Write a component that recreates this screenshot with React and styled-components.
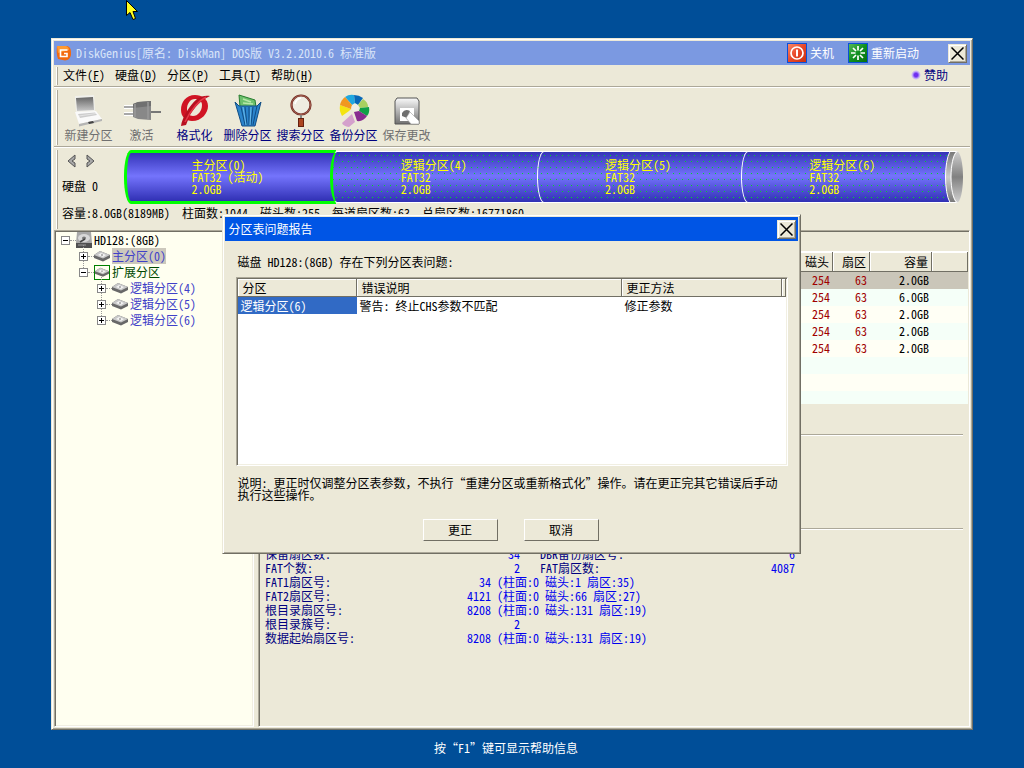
import React from "react";
import styled, { createGlobalStyle, css } from "styled-components";

const GlobalStyle = createGlobalStyle`
  * {
    box-sizing: border-box;
  }

  body {
    margin: 0;
    background: #004e98;
  }

  body,
  button,
  table {
    font-family: "Noto Sans Mono CJK SC", "Noto Sans CJK SC", monospace;
    font-size: 12px;
    line-height: 14px;
    color: #000;
    text-spacing-trim: space-all;
  }
`;

const menus = [
  ["文件", "F"],
  ["硬盘", "D"],
  ["分区", "P"],
  ["工具", "T"],
  ["帮助", "H"],
];

const segments = [
  { name: "主分区(0)", type: "FAT32 (活动)", size: "2.0GB", active: true },
  { name: "逻辑分区(4)", type: "FAT32", size: "2.0GB", next: true },
  { name: "逻辑分区(5)", type: "FAT32", size: "2.0GB" },
  { name: "逻辑分区(6)", type: "FAT32", size: "2.0GB" },
];

const sizes = ["2.0GB", "6.0GB", "2.0GB", "2.0GB", "2.0GB"];

const details = [
  { label: "保留扇区数:", value: "34", label2: "DBR备份扇区号:", value2: "6" },
  { label: "FAT个数:", value: "2", label2: "FAT扇区数:", value2: "4087" },
  { label: "FAT1扇区号:", value: "34", chs: "(柱面:0 磁头:1 扇区:35)" },
  { label: "FAT2扇区号:", value: "4121", chs: "(柱面:0 磁头:66 扇区:27)" },
  { label: "根目录扇区号:", value: "8208", chs: "(柱面:0 磁头:131 扇区:19)" },
  { label: "根目录簇号:", value: "2" },
  { label: "数据起始扇区号:", value: "8208", chs: "(柱面:0 磁头:131 扇区:19)" },
];

/* icons */

const LogoIcon = () => (
  <svg width="16" height="16" viewBox="0 0 16 16">
    <path d="M1 1 H11 Q15 2 15 7 V10 Q14 15 9 15.500 L2 14 Q0 9 1 1Z" fill="#f26a10" />
    <path d="M1 1 H10 Q13 2 13 5 L2 8Z" fill="#ff9a30" />
    <path d="M11.500 5 H4.500 V11.500 H11 V8.500 H8" fill="none" stroke="#fff" strokeWidth="1.600" />
  </svg>
);

const PowerIcon = () => (
  <svg width="20" height="20" viewBox="0 0 20 20">
    <defs>
      <linearGradient id="power" x1="0" y1="0" x2="1" y2="1">
        <stop offset="0" stopColor="#f88a6a" />
        <stop offset="0.5" stopColor="#e8482a" />
        <stop offset="1" stopColor="#c83010" />
      </linearGradient>
    </defs>
    <rect width="20" height="20" fill="#0a50d8" />
    <rect x="1" y="1" width="18" height="18" fill="url(#power)" />
    <circle cx="10" cy="10" r="6" fill="none" stroke="#fff" strokeWidth="1.700" />
    <path d="M10 6.500 V13.500" stroke="#fff" strokeWidth="2" />
  </svg>
);

const RestartIcon = () => (
  <svg width="20" height="20" viewBox="0 0 20 20">
    <defs>
      <linearGradient id="restart" x1="0" y1="0" x2="1" y2="1">
        <stop offset="0" stopColor="#58b858" />
        <stop offset="0.5" stopColor="#109020" />
        <stop offset="1" stopColor="#087010" />
      </linearGradient>
    </defs>
    <rect width="20" height="20" fill="#0a50d8" />
    <rect x="1" y="1" width="18" height="18" fill="url(#restart)" />
    <path
      d="M10 3 V7.500 M10 12.500 V17 M3 10 H7.500 M12.500 10 H17 M5 5 L8 8 M12 12 L15 15 M15 5 L12 8 M8 12 L5 15"
      stroke="#fff"
      strokeWidth="1.700"
    />
  </svg>
);

const CloseIcon = () => (
  <svg width="13" height="13" viewBox="0 0 13 13">
    <path d="M0.500 0.500 L12.500 12.500 M12.500 0.500 L0.500 12.500" stroke="#000" strokeWidth="1.500" />
  </svg>
);

const LaptopIcon = () => (
  <svg width="34" height="34" viewBox="0 0 34 34">
    <defs>
      <linearGradient id="screen" x1="0" y1="0" x2="0" y2="1">
        <stop offset="0" stopColor="#666" />
        <stop offset="1" stopColor="#c8c8c8" />
      </linearGradient>
    </defs>
    <path d="M3 2 L22 1 L23 17 L4 18Z" fill="#f0f0ec" />
    <path d="M4 4 L21 3 L22 16 L5 17Z" fill="url(#screen)" />
    <path d="M3 18 L24 17 L30 25 L7 30Z" fill="#fafafa" />
    <path d="M6 20 L23 18.500 L25 21 L8 24Z" fill="#ccc" />
    <path d="M7 22 L24 19.500" stroke="#eee" strokeWidth="0.700" />
    <path d="M7 30 L30 25 V27 L7 32.500Z" fill="#b4b4b4" />
    <path d="M16 28 L21 27 L22 29 L17 30Z" fill="#444" />
  </svg>
);

const PlugIcon = () => (
  <svg width="40" height="34" viewBox="0 0 40 34">
    <path d="M2 13 H13 M2 20 H13" stroke="#fff" strokeWidth="4" />
    <path d="M2 13 H13 M2 20 H13" stroke="#a8a8a8" strokeWidth="2" />
    <path d="M11 10 L16 8 L29 7 V26 L16 25 L11 23Z" fill="#888" />
    <path d="M11 10 L16 8 L29 7 V12 L11 14Z" fill="#707070" />
    <path d="M13 10 V23 M26 8 V25" stroke="#999" strokeWidth="1.500" />
    <path d="M29 18 H39" stroke="#777" strokeWidth="2" />
  </svg>
);

const FormatIcon = () => (
  <svg width="34" height="34" viewBox="0 0 34 34">
    <path
      fillRule="evenodd"
      d="M17 1 C8 1 3 8 3 16 C3 23 8 27 14 27 C24 27 30 19 30 12 C30 5 24 1 17 1Z M17 5 C21 5 24 7 24 11 C24 17 20 22 15 22 C11 22 9 19 9 15 C9 10 12 5 17 5Z"
      fill="#d01424"
    />
    <path d="M32 2 C23 6 17 13 12 21 L8 31 L3 32 C4 24 11 12 19 5 C23 2 28 1 32 2Z" fill="#b81020" />
    <path d="M28 3 C20 7 13 16 7 28" stroke="#e83848" strokeWidth="1.500" fill="none" />
  </svg>
);

const TrashIcon = () => (
  <svg width="34" height="34" viewBox="0 0 34 34">
    <path d="M8 1 L24 6 L25 13 H9Z" fill="#6cc06c" stroke="#287c30" />
    <path d="M12 5 L20 8 M12 9 L22 10" stroke="#b8e8a8" strokeWidth="1.500" />
    <path d="M4 8 L8 12 H26 L30 8 L24 32 H11Z" fill="#2a84cc" stroke="#104c84" />
    <path d="M10 13 L14 31 M14 13 L16 31 M18 13 V31 M22 13 L20 31 M26 12 L22 31" stroke="#104c84" strokeWidth="1" />
    <path d="M12 13 L15 31 M20 13 L19 31" stroke="#68bbea" strokeWidth="1" />
  </svg>
);

const SearchIcon = () => (
  <svg width="34" height="34" viewBox="0 0 34 34">
    <circle cx="17" cy="11" r="9.500" fill="#efece2" stroke="#6c2820" strokeWidth="2.200" />
    <circle cx="17" cy="11" r="9.500" fill="none" stroke="#b87060" strokeWidth="0.800" />
    <path d="M11 10 Q12 5 17 4" stroke="#fff" strokeWidth="1.500" fill="none" />
    <rect x="16" y="21" width="2" height="4" fill="#888" />
    <rect x="14.500" y="24.500" width="5" height="8" fill="#ac4420" stroke="#642010" />
  </svg>
);

const WheelIcon = () => (
  <svg width="34" height="34" viewBox="0 0 34 34">
    <path d="M15 11 L8 3 Q12 0 17 1 L18 9Z" fill="#20a8e0" />
    <path d="M18 9 L17 1 Q22 1 26 4 L21 11Z" fill="#0868b8" />
    <path d="M21 11 L26 5 Q31 8 31 13 L23 14Z" fill="#a8d060" />
    <path d="M23 14 L32 13 Q33 19 30 22 L22 17Z" fill="#10a048" />
    <path d="M22 17 L30 22 Q26 28 20 27 L17 18Z" fill="#882c90" />
    <path d="M15 20 L18 28 L12 33 Q6 32 5 29Z" fill="#d4a0cc" />
    <path d="M14 15 L12 17 L5 22 Q2 17 3 11Z" fill="#f4e410" />
    <path d="M15 11 L14 15 L3 11 Q4 6 8 3Z" fill="#f09820" />
    <circle cx="18" cy="13.500" r="3.500" fill="#f0eee4" />
  </svg>
);

const SaveIcon = () => (
  <svg width="34" height="34" viewBox="0 0 34 34">
    <defs>
      <linearGradient id="floppy" x1="0" y1="0" x2="0" y2="1">
        <stop offset="0" stopColor="#fafafa" />
        <stop offset="1" stopColor="#707070" />
      </linearGradient>
    </defs>
    <path d="M7 4 H27 L29 7 V30 H5 V7Z" fill="url(#floppy)" stroke="#555" />
    <rect x="10" y="14" width="14" height="13" fill="#fff" />
    <path d="M12 19 Q15 14 20 17 L17 24 L12 22Z" fill="#707070" />
    <path d="M20 18 L29 27 V30 H21 L16 24Z" fill="#fff" stroke="#999" strokeWidth="0.600" />
  </svg>
);

const tools = [
  { label: "新建分区", Icon: LaptopIcon, disabled: true },
  { label: "激活", Icon: PlugIcon, disabled: true },
  { label: "格式化", Icon: FormatIcon },
  { label: "删除分区", Icon: TrashIcon },
  { label: "搜索分区", Icon: SearchIcon },
  { label: "备份分区", Icon: WheelIcon },
  { label: "保存更改", Icon: SaveIcon, disabled: true },
];

const ArrowIcon = ({ right }) => (
  <svg width="11" height="14" viewBox="0 0 11 14">
    <path
      d={right ? "M2 1 L9 7 L2 13 V9 L5 7 L2 5Z" : "M9 1 L2 7 L9 13 V9 L6 7 L9 5Z"}
      fill="#a8a8a8"
      stroke="#555"
    />
  </svg>
);

const HardDiskIcon = () => (
  <svg width="16" height="16" viewBox="0 0 16 16">
    <path d="M1 0 H15 L16 11 H0Z" fill="#a8a8a8" />
    <rect y="11" width="16" height="5" fill="#505050" />
    <ellipse cx="8" cy="6" rx="6" ry="4" fill="#d8d8d8" />
    <ellipse cx="8" cy="6" rx="2" ry="1.500" fill="#777" />
    <path d="M4 10 L9 7" stroke="#444" strokeWidth="1.500" />
    <path d="M2 13 H10" stroke="#999" />
  </svg>
);

const VolumeIcon = () => (
  <svg width="16" height="12" viewBox="0 0 16 12">
    <path d="M0 5 L6 1 L16 5 V8 L9 11.500 L0 8Z" fill="#686868" />
    <path d="M0 5 L6 1 L16 5 L9 8.500Z" fill="#c8c8c8" />
    <path d="M4 5 L7 3 L12 5 L9 7Z" fill="#f4f4f4" />
    <path d="M7 5 H9" stroke="#777" />
  </svg>
);

const EndCap = () => (
  <svg width="19" height="54" viewBox="0 0 19 54">
    <defs>
      <linearGradient id="rim" x1="0" y1="0" x2="0" y2="1">
        <stop offset="0" stopColor="#777" />
        <stop offset="0.5" stopColor="#ccc" />
        <stop offset="1" stopColor="#777" />
      </linearGradient>
      <linearGradient id="face" x1="0" y1="0" x2="0" y2="1">
        <stop offset="0" stopColor="#d0d0d0" />
        <stop offset="0.5" stopColor="#808080" />
        <stop offset="1" stopColor="#d0d0d0" />
      </linearGradient>
    </defs>
    <path d="M5 1.500 C-1 12 -1 42 5 52.500 H12 V1.500Z" fill="url(#rim)" stroke="#fff" />
    <ellipse cx="12" cy="27" rx="6" ry="25.500" fill="url(#face)" />
    <path d="M12 1.500 C4 8 4 46 12 52.500" fill="none" stroke="#fff" />
  </svg>
);

const Pointer = () => (
  <PointerSvg width="13" height="21" viewBox="0 0 13 21">
    <path d="M0.500 0.500 V15.500 L4 12.500 L7 19.500 L9.500 18.500 L7 11.500 H11.500Z" fill="#ffff20" stroke="#000" />
  </PointerSvg>
);

const TreeItem = ({ level, open, icon, label, color, selected }) => (
  <TreeRow $level={level}>
    <Expander $level={level} aria-label={open ? "collapse" : "expand"}>
      <svg width="9" height="9" viewBox="0 0 9 9">
        <rect x="0.500" y="0.500" width="8" height="8" fill="#fff" stroke="#888" />
        <path d={open ? "M2 4.500 H7" : "M2 4.500 H7 M4.500 2 V7"} stroke="#000" />
      </svg>
    </Expander>
    <Twig />
    {icon}
    <TreeLabel $color={color} $selected={selected}>
      {label}
    </TreeLabel>
  </TreeRow>
);

const App = () => {
  return (
    <>
      <GlobalStyle />
      <Desktop>
        <Window>
          <TitleBar>
            <LogoIcon />
            <h1>DiskGenius[原名: DiskMan] DOS版 V3.2.2010.6 标准版</h1>
            <SystemButton>
              <PowerIcon />
              关机
            </SystemButton>
            <SystemButton>
              <RestartIcon />
              重新启动
            </SystemButton>
            <CloseButton aria-label="关闭">
              <CloseIcon />
            </CloseButton>
          </TitleBar>

          <MenuBar>
            <Grip />
            {menus.map(([name, key]) => (
              <MenuButton key={key}>
                {name}(<u>{key}</u>)
              </MenuButton>
            ))}
            <Sponsor href="#sponsor">赞助</Sponsor>
          </MenuBar>
          <Divider />

          <ToolBar>
            <Grip />
            {tools.map(({ label, Icon, disabled }) => (
              <ToolButton key={label} disabled={disabled}>
                <Icon />
                {label}
              </ToolButton>
            ))}
          </ToolBar>
          <Divider />

          <DiskPanel>
            <Grip />
            <DiskArea>
              <DiskTop>
                <DiskNav>
                  <div>
                    <ArrowButton aria-label="上一个硬盘">
                      <ArrowIcon />
                    </ArrowButton>
                    <ArrowButton aria-label="下一个硬盘">
                      <ArrowIcon right />
                    </ArrowButton>
                  </div>
                  <span>硬盘 0</span>
                </DiskNav>
                <Cylinder>
                  {segments.map((s) => (
                    <Segment key={s.name} $active={s.active} $next={s.next}>
                      <span>
                        {s.name}
                        <br />
                        {s.type}
                        <br />
                        {s.size}
                      </span>
                    </Segment>
                  ))}
                  <EndCap />
                </Cylinder>
              </DiskTop>
              <DiskInfo>
                {"容量:8.0GB(8189MB)  柱面数:1044  磁头数:255  每道扇区数:63  总扇区数:16771860"}
              </DiskInfo>
            </DiskArea>
          </DiskPanel>

          <Panes>
            <Tree>
              <TreeItem level={0} open icon={<HardDiskIcon />} label="HD128:(8GB)" color="#000" />
              <TreeItem level={1} icon={<VolumeIcon />} label="主分区(0)" color="#4040c8" selected />
              <TreeItem
                level={1}
                open
                icon={
                  <GreenFrame>
                    <VolumeIcon />
                  </GreenFrame>
                }
                label="扩展分区"
                color="#004800"
              />
              <TreeItem level={2} icon={<VolumeIcon />} label="逻辑分区(4)" color="#4040c8" />
              <TreeItem level={2} icon={<VolumeIcon />} label="逻辑分区(5)" color="#4040c8" />
              <TreeItem level={2} icon={<VolumeIcon />} label="逻辑分区(6)" color="#4040c8" />
            </Tree>

            <Content>
              <PartitionList>
                <PartitionTable>
                  <colgroup>
                    <col />
                    <col width="35" />
                    <col width="37" />
                    <col width="62" />
                    <col width="36" />
                  </colgroup>
                  <thead>
                    <tr>
                      <th />
                      <th>磁头</th>
                      <th>扇区</th>
                      <th>容量</th>
                      <th />
                    </tr>
                  </thead>
                  <tbody>
                    {sizes.map((size, i) => (
                      <PartitionRow key={i} $selected={i === 0}>
                        <td />
                        <RedCell>254</RedCell>
                        <RedCell>63</RedCell>
                        <td>{size}</td>
                        <td />
                      </PartitionRow>
                    ))}
                  </tbody>
                </PartitionTable>
              </PartitionList>
              <Summary />
              <Summary $tall />
              <Details>
                {details.map((d) => (
                  <DetailRow key={d.label}>
                    <dt>{d.label}</dt>
                    <DetailValue $short={d.chs}>{d.value}</DetailValue>
                    {d.chs && <Chs>{d.chs}</Chs>}
                    {d.label2 && (
                      <>
                        <SecondLabel>{d.label2}</SecondLabel>
                        <DetailValue>{d.value2}</DetailValue>
                      </>
                    )}
                  </DetailRow>
                ))}
              </Details>
            </Content>
          </Panes>
        </Window>
        <Hint>按“F1”键可显示帮助信息</Hint>
      </Desktop>

      <Overlay>
        <Dialog role="dialog" aria-labelledby="report-title">
          <DialogTitle>
            <h2 id="report-title">分区表问题报告</h2>
            <CloseButton aria-label="关闭">
              <CloseIcon />
            </CloseButton>
          </DialogTitle>
          <DialogBody>
            <p>磁盘 HD128:(8GB) 存在下列分区表问题:</p>
            <ProblemList>
              <ProblemTable>
                <colgroup>
                  <col width="119" />
                  <col width="265" />
                  <col width="160" />
                  <col />
                </colgroup>
                <thead>
                  <tr>
                    <th>分区</th>
                    <th>错误说明</th>
                    <th>更正方法</th>
                    <th />
                  </tr>
                </thead>
                <tbody>
                  <tr>
                    <SelectedCell>逻辑分区(6)</SelectedCell>
                    <td>警告: 终止CHS参数不匹配</td>
                    <td>修正参数</td>
                    <td />
                  </tr>
                </tbody>
              </ProblemTable>
            </ProblemList>
            <Note>
              说明: 更正时仅调整分区表参数，不执行“重建分区或重新格式化”操作。请在更正完其它错误后手动执行这些操作。
            </Note>
            <Actions>
              <PushButton>更正</PushButton>
              <PushButton>取消</PushButton>
            </Actions>
          </DialogBody>
        </Dialog>
      </Overlay>
      <Pointer />
    </>
  );
};

/* shared bevels */

const raised = css`
  border: 1px solid;
  border-color: #ece9d8 #716f64 #716f64 #ece9d8;
  box-shadow: inset 1px 1px #fff, inset -1px -1px #aca899;
  background: #ece9d8;
`;

const sunken = css`
  border: 1px solid;
  border-color: #aca899 #fff #fff #aca899;
  box-shadow: inset 1px 1px #716f64, inset -1px -1px #f1efe2;
`;

const headerCell = css`
  padding: 0 3px;
  font-weight: normal;
  background: #ece9d8;
  border-right: 1px solid #716f64;
  border-bottom: 1px solid #716f64;
  box-shadow: inset 1px 1px #fff;
`;

/* window */

const Desktop = styled.div`
  display: flex;
  flex-direction: column;
  min-height: 100vh;
  padding: 38px 51px 0;
`;

const Window = styled.main`
  ${raised}
  flex: 1;
  display: flex;
  flex-direction: column;
  padding: 2px;
`;

const TitleBar = styled.header`
  display: flex;
  align-items: center;
  height: 24px;
  padding: 0 3px 0 2px;
  background: #7b99e1;

  h1 {
    flex: 1;
    margin: 0 0 0 4px;
    font-size: 12px;
    font-weight: normal;
    color: #d8e4f8;
  }
`;

const SystemButton = styled.button`
  display: flex;
  align-items: center;
  gap: 3px;
  margin-right: 14px;
  padding: 0;
  border: 0;
  background: none;
  color: #fff;
`;

const CloseButton = styled.button`
  ${raised}
  display: flex;
  align-items: center;
  justify-content: center;
  width: 19px;
  height: 19px;
  margin-left: 15px;
  padding: 0;
`;

const Grip = styled.i`
  align-self: stretch;
  width: 2px;
  margin: 2px 0 1px 2px;
  border-left: 1px solid #fff;
  border-right: 1px solid #aca899;
`;

const MenuBar = styled.nav`
  display: flex;
  align-items: center;
  height: 21px;
`;

const MenuButton = styled.button`
  width: 52px;
  padding: 0 0 2px;
  border: 0;
  background: none;
`;

const Sponsor = styled.a`
  display: flex;
  align-items: center;
  gap: 3px;
  margin: 0 22px 2px auto;
  color: #000080;
  text-decoration: none;

  &::before {
    content: "";
    width: 10px;
    height: 10px;
    border-radius: 50%;
    background: radial-gradient(#7030f0 25%, #c0a8f8 50%, transparent 70%);
  }
`;

const Divider = styled.div`
  height: 2px;
  border-top: 1px solid #aca899;
  border-bottom: 1px solid #fff;
`;

const ToolBar = styled.div`
  display: flex;
  height: 58px;
`;

const ToolButton = styled.button`
  display: flex;
  flex-direction: column;
  align-items: center;
  width: 53px;
  padding: 6px 0 0;
  border: 0;
  background: none;
  color: #000080;

  &:first-of-type {
    margin-left: 4px;
  }

  &:disabled {
    color: #707070;
  }
`;

/* disk panel */

const DiskPanel = styled.section`
  display: flex;
  height: 82px;
`;

const DiskArea = styled.div`
  flex: 1;
  min-width: 0;
  padding: 2px 6px 0 4px;
`;

const DiskTop = styled.div`
  display: flex;
`;

const DiskNav = styled.div`
  width: 62px;
  padding-top: 4px;

  div {
    display: flex;
    gap: 8px;
    height: 14px;
    margin: 0 0 11px 4px;
  }
`;

const ArrowButton = styled.button`
  display: flex;
  padding: 0;
  border: 0;
  background: none;
`;

const Cylinder = styled.div`
  flex: 1;
  display: flex;
  align-items: center;
`;

const Segment = styled.button`
  flex: 1;
  display: flex;
  align-items: center;
  justify-content: center;
  height: 52px;
  margin-right: -6px;
  padding: 0 8px 0 0;
  border: solid #fff;
  border-width: 1px 0 1px 1px;
  border-radius: 7px 0 0 7px / 26px 0 0 26px;
  background: conic-gradient(from 270deg at 1px 1px, #00d828 90deg, transparent 0) 0 3px / 6px 12px,
    conic-gradient(from 270deg at 1px 1px, #00d828 90deg, transparent 0) 3px 9px / 6px 12px,
    linear-gradient(#3434b8, #7474fc 48%, #3030b4);
  color: #ffff00;
  line-height: 12px;
  text-align: left;

  ${(p) =>
    p.$next &&
    css`
      border-left: 3px solid #00ff00;
    `}

  ${(p) =>
    p.$active &&
    css`
      height: 54px;
      border: solid #00ff00;
      border-width: 3px 0 3px 3px;
      background: linear-gradient(#3434b8, #7474fc 48%, #3030b4);
    `}
`;

const DiskInfo = styled.div`
  margin-top: 2px;
  white-space: pre;
`;

/* tree */

const Panes = styled.div`
  flex: 1;
  display: flex;
  gap: 4px;
`;

const Tree = styled.aside`
  ${sunken}
  width: 200px;
  padding: 1px 6px;
  background: #fffff0;
`;

const TreeRow = styled.div`
  display: flex;
  align-items: center;
  height: 16px;
  padding-left: ${(p) => p.$level * 18}px;
`;

const Expander = styled.button`
  position: relative;
  display: flex;
  padding: 0;
  border: 0;
  background: none;

  &::before {
    content: "";
    position: absolute;
    left: 4px;
    bottom: 9px;
    height: ${(p) => (p.$level ? 7 : 0)}px;
    border-left: 1px dotted #999;
  }
`;

const Twig = styled.i`
  width: 6px;
  border-top: 1px dotted #999;
`;

const GreenFrame = styled.span`
  display: flex;
  align-items: center;
  justify-content: center;
  width: 16px;
  height: 15px;
  border: 1px solid #008000;
  overflow: hidden;
`;

const TreeLabel = styled.span`
  height: 16px;
  margin-left: 2px;
  line-height: 16px;
  color: ${(p) => p.$color};
  background: ${(p) => (p.$selected ? "#ccc8bc" : "none")};
`;

/* right side */

const Content = styled.section`
  flex: 1;
  min-width: 0;
  padding: 20px 1px 0 2px;
  border: 1px solid;
  border-color: #aca899 #fff #fff #aca899;
  box-shadow: inset 1px 1px #716f64;
`;

const PartitionList = styled.div`
  height: 153px;
  border-top: 1px solid #fff;
  background: repeating-linear-gradient(#f5fff8 0 17px, #fffff5 17px 34px);
  background-position: 0 3px;
`;

const PartitionTable = styled.table`
  width: 100%;
  table-layout: fixed;
  border-collapse: separate;
  border-spacing: 0;
  text-align: right;

  th {
    ${headerCell}
    height: 20px;
  }

  td {
    height: 17px;
    padding: 0 3px 1px 0;
  }
`;

const PartitionRow = styled.tr`
  background: ${(p) => (p.$selected ? "#cac6b9" : "none")};
`;

const RedCell = styled.td`
  color: #a00000;
`;

const Summary = styled.div`
  height: ${(p) => (p.$tall ? 94 : 32)}px;
  margin: 0 5px;
  border-bottom: 1px solid #fff;
  box-shadow: inset 0 -1px #aca899;
`;

const Details = styled.dl`
  margin: 17px 4px 0;
  color: #000080;
`;

const DetailRow = styled.div`
  display: flex;
  height: 14px;

  dt {
    width: 151px;
  }

  dd {
    margin: 0;
    color: #0000ee;
  }
`;

const DetailValue = styled.dd`
  width: ${(p) => (p.$short ? 75 : 104)}px;
  text-align: right;
`;

const SecondLabel = styled.dt`
  margin-left: 20px;
`;

const Chs = styled.dd`
  && {
    margin-left: 6px;
  }
`;

const Hint = styled.footer`
  height: 38px;
  padding-right: 12px;
  line-height: 36px;
  text-align: center;
  color: #fff;
`;

/* dialog */

const Overlay = styled.div`
  position: fixed;
  inset: 0;
  display: flex;
  align-items: center;
  justify-content: center;
  padding-right: 2px;
`;

const Dialog = styled.div`
  ${raised}
  width: 579px;
  max-width: 100%;
  padding: 2px;
`;

const DialogTitle = styled.div`
  display: flex;
  align-items: center;
  height: 24px;
  padding: 0 2px 0 4px;
  background: #0055e5;

  h2 {
    flex: 1;
    margin: 0;
    font-size: 12px;
    font-weight: normal;
    color: #fff;
  }
`;

const DialogBody = styled.div`
  padding: 14px 10px 10px 11px;

  p {
    margin: 0 2px 8px;
  }
`;

const ProblemList = styled.div`
  ${sunken}
  height: 189px;
  padding: 1px;
  background: #fff;
`;

const ProblemTable = styled.table`
  width: 100%;
  table-layout: fixed;
  border-collapse: separate;
  border-spacing: 0;
  text-align: left;

  th {
    ${headerCell}
    height: 18px;
    padding-left: 5px;
  }

  td {
    height: 17px;
    padding: 0 3px;
  }
`;

const SelectedCell = styled.td`
  color: #fff;
  background: #316ac5;
`;

const Note = styled.p`
  && {
    margin: 11px 2px 18px;
    line-height: 12px;
  }
`;

const Actions = styled.div`
  display: flex;
  justify-content: center;
  gap: 26px;
  padding-right: 2px;
`;

const PushButton = styled.button`
  width: 75px;
  height: 22px;
  padding: 0;
  border: 1px solid;
  border-color: #fff #716f64 #716f64 #fff;
  background: #ece9d8;
`;

const PointerSvg = styled.svg`
  position: absolute;
  top: 0;
  left: 126px;
`;

export default App;
